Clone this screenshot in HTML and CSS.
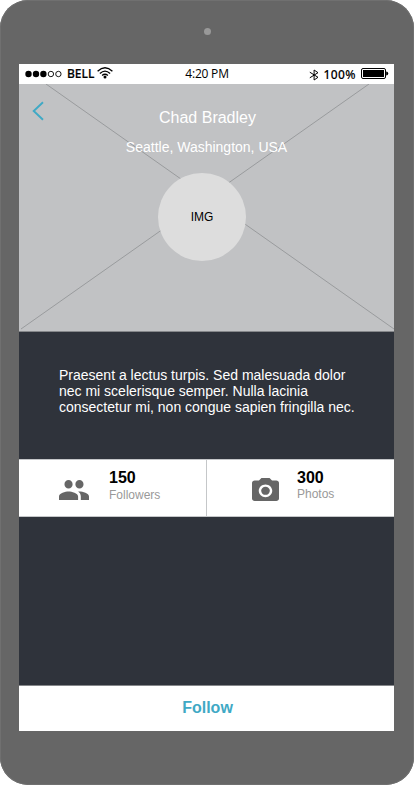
FILE: index.html
```html
<!DOCTYPE html>
<html lang="en">
<head>
<meta charset="utf-8">
<title>Profile</title>
<link rel="stylesheet" href="styles.css">
</head>
<body>
<div class="phone">
  <div class="bezel"><span class="camera"></span></div>
  <main class="screen">
    <header class="status">
      <div class="carrier">
        <svg class="signal" width="38" height="8" viewBox="0 0 38 8"><circle cx="3.500" cy="4" r="3.200"/><circle cx="11" cy="4" r="3.200"/><circle cx="18.400" cy="4" r="3.200"/><g fill="none" stroke="#000" stroke-width=".9"><circle cx="25.900" cy="4" r="2.700"/><circle cx="33.400" cy="4" r="2.700"/></g></svg>
        <span class="carrier-name">BELL</span>
        <svg class="wifi" width="16" height="12" viewBox="0 0 16 12"><g fill="none" stroke="#000" stroke-width="1.350"><path d="M.6 4.200Q8-2.600 15.400 4.200"/><path d="M2.900 6.400Q8 1.800 13.100 6.400"/><path d="M5.100 8.500Q8 6 10.900 8.500"/></g><circle cx="8" cy="10" r="1.500"/></svg>
      </div>
      <span class="clock">4:20 PM</span>
      <div class="power">
        <svg class="bluetooth" width="10" height="12" viewBox="0 0 10 12" fill="none" stroke="#000"><path d="M.8 3.200 9 8.300 5.100 11V1L9 3.700.8 8.800"/></svg>
        <span class="percent">100%</span>
        <svg class="battery" width="28" height="12" viewBox="0 0 28 12"><rect x=".5" y=".5" width="24" height="10" rx="1.500" fill="none" stroke="#000"/><rect x="2" y="2" width="21" height="7"/><path d="M25.200 3.500Q27.200 3.700 27.200 5.500T25.200 7.500Z"/></svg>
      </div>
    </header>
    <section class="hero">
      <svg class="cross" width="375" height="247" viewBox="0 0 375 247" fill="none" stroke="#999b9d"><path d="M27 0 375 245M350 0 2 245"/></svg>
      <svg class="back" width="12" height="20" viewBox="0 0 12 20" fill="none" stroke="#3fa9c5" stroke-width="1.900"><path d="M11 1.200 1.700 10 11 18.800"/></svg>
      <h1 class="name">Chad Bradley</h1>
      <p class="place">Seattle, Washington, USA</p>
      <div class="avatar">IMG</div>
    </section>
    <p class="bio">Praesent a lectus turpis. Sed malesuada dolor<br>nec mi scelerisque semper. Nulla lacinia<br>consectetur mi, non congue sapien fringilla nec.</p>
    <section class="stats">
      <div class="stat followers">
        <svg class="people" width="30" height="20" viewBox="1 5 22 14" preserveAspectRatio="none"><path d="M16 11c1.660 0 2.990-1.340 2.990-3S17.660 5 16 5s-3 1.340-3 3 1.340 3 3 3zm-8 0c1.660 0 2.990-1.340 2.990-3S9.660 5 8 5 5 6.340 5 8s1.340 3 3 3zm0 2c-2.330 0-7 1.170-7 3.500V19h14v-2.500c0-2.330-4.670-3.500-7-3.500zm8 0c-.29 0-.62.02-.97.05 1.160.84 1.970 1.970 1.970 3.450V19h6v-2.500c0-2.330-4.670-3.500-7-3.500z"/></svg>
        <div class="figures"><strong>150</strong><span>Followers</span></div>
      </div>
      <div class="stat photos">
        <svg class="photo" width="27" height="23" viewBox="2 2 20 18" preserveAspectRatio="none"><circle cx="12" cy="12" r="3.200"/><path d="M9 2 7.170 4H4c-1.100 0-2 .9-2 2v12c0 1.100.9 2 2 2h16c1.100 0 2-.9 2-2V6c0-1.100-.9-2-2-2h-3.170L15 2H9zm3 15c-2.760 0-5-2.240-5-5s2.240-5 5-5 5 2.240 5 5-2.240 5-5 5z"/></svg>
        <div class="figures"><strong>300</strong><span>Photos</span></div>
      </div>
    </section>
    <div class="feed"></div>
    <button class="follow">Follow</button>
  </main>
</div>
</body>
</html>
```
FILE: styles.css
```css
* { box-sizing: border-box; }
body { margin: 0; background: #fff; font-family: "Liberation Sans", Arial, sans-serif; }
h1, p { margin: 0; }
svg { display: block; flex: none; }

.phone { width: 414px; height: 785px; padding: 0 20px 0 19px; background: #666; border-radius: 28px; box-shadow: inset 0 0 0 1px #707070; }
.bezel { height: 64px; display: flex; justify-content: center; padding: 28px 0 0 1px; }
.camera { width: 7px; height: 7px; border-radius: 50%; background: #999; }
.screen { width: 375px; height: 667px; display: flex; flex-direction: column; background: #2f333b; }

.status { height: 20px; display: grid; grid-template-columns: 1fr auto 1fr; align-items: center; padding: 0 5px 0 6px; background: #fff; color: #000; font: 12px/20px "Noto Sans", sans-serif; white-space: nowrap; }
.carrier, .power { height: 20px; display: flex; align-items: center; }
.power { justify-content: flex-end; }
.signal { margin-bottom: 1px; }
.carrier-name { margin: -1px 3px 0 4px; font-weight: 500; -webkit-text-stroke: .2px #000; }
.wifi { margin-bottom: 2px; }
.clock { font-family: "Open Sans", sans-serif; letter-spacing: -.2px; }
.bluetooth { margin: 2px 5px 0 0; }
.percent { margin: 1px 5px 0 0; font-weight: 500; letter-spacing: .4px; -webkit-text-stroke: .1px #000; }

.hero { position: relative; height: 248px; padding: 24px 0 0 2px; display: flex; flex-direction: column; align-items: center; background: #c1c2c4; border-bottom: 1px solid #85878a; color: #fff; }
.cross { position: absolute; left: 0; top: 0; }
.back { position: absolute; left: 13px; top: 17px; }
.name { position: relative; font-size: 16px; line-height: 19px; font-weight: 400; }
.place { position: relative; margin: 12px 2px 0 0; font-size: 14px; line-height: 16px; }
.avatar { position: relative; align-self: flex-start; width: 88px; height: 88px; margin: 18px 0 0 137px; border-radius: 50%; background: #ddd; color: #000; font-size: 12px; line-height: 88px; text-align: center; }

.bio { height: 127px; padding: 35px 0 0 40px; color: #fff; font-size: 14px; line-height: 16px; white-space: nowrap; }

.stats { height: 58px; display: flex; background: #fff; border: solid #c5c7c9; border-width: 1px 0; }
.stat { display: flex; fill: #666; }
.followers { width: 188px; border-right: 1px solid #c5c7c9; padding-left: 40px; gap: 20px; }
.photos { padding-left: 45px; gap: 18px; }
.people { margin-top: 20px; }
.photo { margin-top: 18px; }
.figures { display: flex; flex-direction: column; padding-top: 8px; }
.figures strong { color: #000; font-size: 16px; line-height: 19px; }
.figures span { margin-top: 1px; color: #999; font-size: 12px; line-height: 14px; }
.photos span { margin-top: 0; }

.feed { flex: 1; }
.follow { height: 46px; padding: 0 0 3px 2px; border: 0; border-top: 1px solid #85878a; background: #fff; color: #3fa9c5; font: 700 16px/19px "Liberation Sans", Arial, sans-serif; }
```
